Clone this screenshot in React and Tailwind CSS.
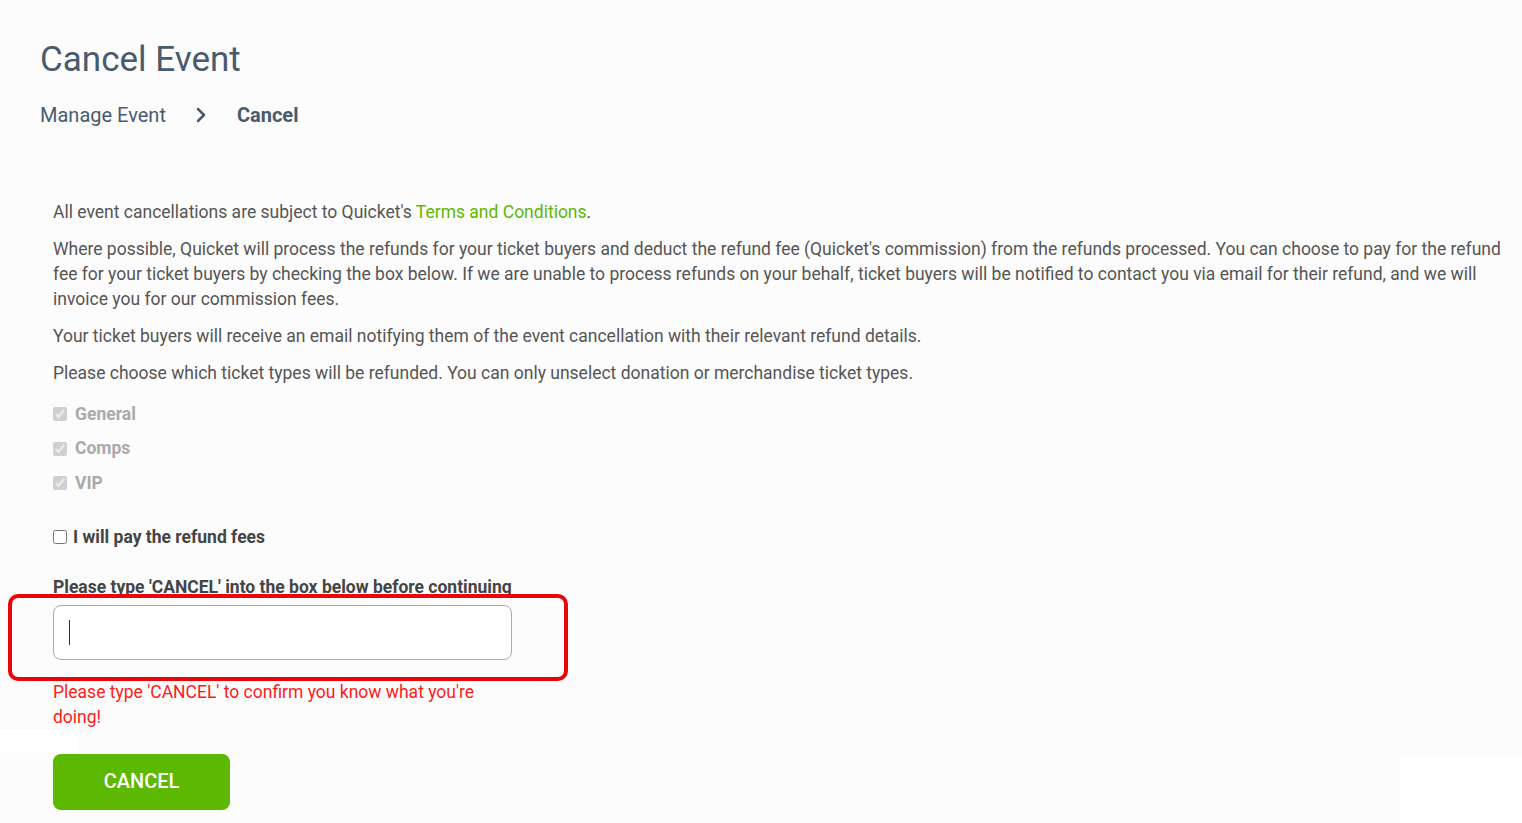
import { ChevronRight } from 'lucide-react';

function TicketType({ label }) {
    return (
        <label className="flex items-center gap-2 h-[34.5px] text-[#aaaaaa] font-bold">
            <input type="checkbox" checked disabled readOnly className="w-[14px] h-[14px] m-0 accent-[#cccccc]" />
            <span>{label}</span>
        </label>
    );
}

export default function App() {
    return (
        <div className="relative min-h-[823px] bg-[#fcfcfc] overflow-hidden" style={{ fontFamily: 'Roboto, "Liberation Sans", sans-serif' }}>
            {/* Header */}
            <div className="pl-10 pt-[39px]">
                <h1 className="text-[35px] leading-[42px] text-[#4a5a6d]">Cancel Event</h1>
                <div className="flex items-center mt-[19px] text-[20px] text-[#4a5a6d]">
                    <span>Manage Event</span>
                    <ChevronRight className="ml-[23px] mr-[24px]" size={24} strokeWidth={2.5} />
                    <span className="font-bold">Cancel</span>
                </div>
            </div>

            {/* Body */}
            <div className="pl-[53px] pr-4 pt-[70px] text-[17.5px] leading-[25px] text-[#555555]">
                <p className="mb-3">
                    All event cancellations are subject to Quicket's <a href="#" className="text-[#5cb800]">Terms and Conditions</a>.
                </p>
                <p className="mb-3">
                    Where possible, Quicket will process the refunds for your ticket buyers and deduct the refund fee (Quicket's commission) from the refunds processed. You can choose to pay for the refund fee for your ticket buyers by checking the box below. If we are unable to process refunds on your behalf, ticket buyers will be notified to contact you via email for their refund, and we will invoice you for our commission fees.
                </p>
                <p className="mb-3">
                    Your ticket buyers will receive an email notifying them of the event cancellation with their relevant refund details.
                </p>
                <p className="mb-[11px]">
                    Please choose which ticket types will be refunded. You can only unselect donation or merchandise ticket types.
                </p>

                <div className="flex flex-col">
                    <TicketType label="General" />
                    <TicketType label="Comps" />
                    <TicketType label="VIP" />
                </div>

                <label className="flex items-center gap-[6px] mt-[24px] font-bold text-[#444444]">
                    <input type="checkbox" className="w-[14px] h-[14px] m-0" />
                    <span>I will pay the refund fees</span>
                </label>

                <div className="w-[459px] mt-[25px]">
                    <p className="font-bold text-[#444444]">Please type 'CANCEL' into the box below before continuing</p>
                    <div className="relative mt-[5px]">
                        <input
                            type="text"
                            className="w-full h-[55px] rounded-lg border border-[#aaaaaa] bg-white px-4 outline-none"
                        />
                        <span className="absolute left-[16px] top-[15px] w-px h-[25px] bg-[#333333]" />
                    </div>
                    <p className="mt-[20px] text-[#ff1a1a]">Please type 'CANCEL' to confirm you know what you're doing!</p>
                </div>

                <button className="mt-[24px] w-[177px] h-[56px] rounded-lg bg-[#5cb800] text-white text-[20px] font-medium">
                    CANCEL
                </button>
            </div>

            {/* annotation frame */}
            <div className="absolute left-[8px] top-[594px] w-[560px] h-[87px] rounded-[10px] border-4 border-[#e8060a] pointer-events-none" />
            <div className="absolute left-0 top-[730px] w-[78px] h-[23px] bg-white" />
            <div className="absolute left-[1400px] top-[755px] w-[122px] h-[68px] bg-white" />
        </div>
    );
}
